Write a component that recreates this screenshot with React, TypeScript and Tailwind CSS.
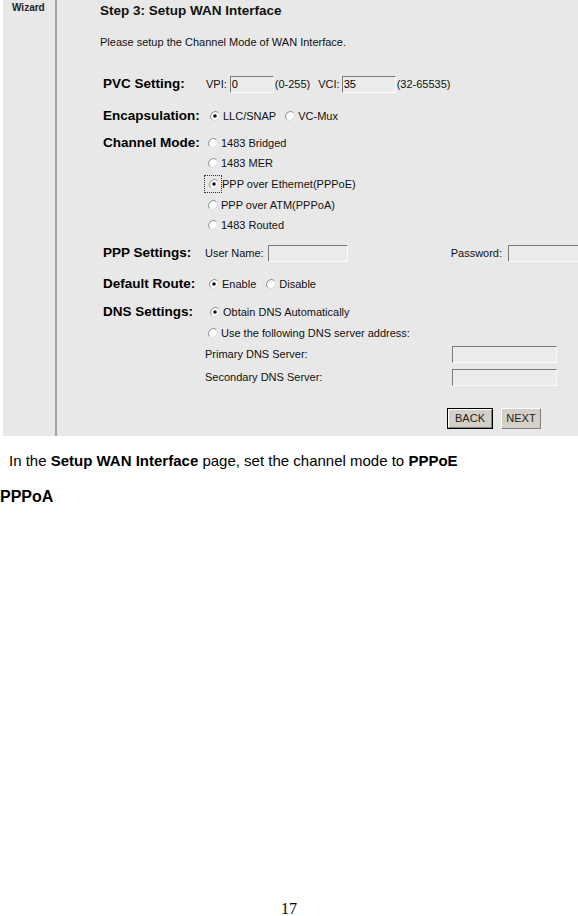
import React from 'react';

const Radio: React.FC<{ checked?: boolean }> = ({ checked }) => (
  <svg width="12" height="12" viewBox="0 0 12 12" className="shrink-0">
    <circle cx="6" cy="6" r="5" fill="#ffffff" />
    <path d="M2.5 9.5 A5 5 0 0 1 9.5 2.5" stroke="#8a8a8a" strokeWidth="1" fill="none" />
    <path d="M9.5 2.5 A5 5 0 0 1 2.5 9.5" stroke="#d6d6d6" strokeWidth="1" fill="none" />
    {checked && <circle cx="6" cy="6" r="1.8" fill="#111111" />}
  </svg>
);

const Field: React.FC<{ value?: string; className?: string }> = ({ value, className }) => (
  <div
    className={`h-[17px] shrink-0 border border-t-[#7a7a7a] border-l-[#7a7a7a] border-b-[#fbfbfb] border-r-[#fbfbfb] bg-[#ebebeb] px-[1px] text-[11px] leading-[15px] text-black ${className}`}
  >
    {value}
  </div>
);

const Row: React.FC<{ label?: string; className?: string; children?: React.ReactNode }> = ({ label, className, children }) => (
  <div className={`flex h-[20px] items-center whitespace-nowrap ${className}`}>
    <span className="w-[105px] shrink-0 pl-[3px] text-[13.5px] font-bold text-black">{label}</span>
    {children}
  </div>
);

const Option: React.FC<{ checked?: boolean; label: string; className?: string }> = ({ checked, label, className }) => (
  <span className={`flex shrink-0 items-center gap-[2px] ${className}`}>
    <Radio checked={checked} />
    <span>{label}</span>
  </span>
);

export default function App() {
  return (
    <div className="flex h-[916px] w-[578px] flex-col overflow-hidden bg-white font-['Liberation_Sans',Arial,sans-serif] text-black">
      {/* Wizard panel */}
      <div className="ml-[3px] flex h-[436px] shrink-0 overflow-hidden bg-[#e8e8e8]">
        <div className="w-[54px] shrink-0 border-r-2 border-[#a2a2a2] pl-[9px] pt-[2px] text-[10px] font-bold leading-[12px] text-[#222]">
          Wizard
        </div>

        <div className="flex shrink-0 flex-col pl-[43px] text-[11px] text-[#111]">
          <div className="mt-[2px] flex h-[18px] items-center text-[13.5px] font-bold">Step 3: Setup WAN Interface</div>
          <div className="mt-[13px] flex h-[18px] items-center">Please setup the Channel Mode of WAN Interface.</div>

          <Row label="PVC Setting:" className="mt-[23px]">
            <span className="ml-[1px]">VPI:</span>
            <Field value="0" className="ml-[3px] w-[44px]" />
            <span className="ml-[1px]">(0-255)</span>
            <span className="ml-[8px]">VCI:</span>
            <Field value="35" className="ml-[2px] w-[54px]" />
            <span className="ml-[1px]">(32-65535)</span>
          </Row>

          <Row label="Encapsulation:" className="mt-[12px]">
            <Option checked label="LLC/SNAP" className="ml-[4px]" />
            <Option label="VC-Mux" className="ml-[8px]" />
          </Row>

          <Row label="Channel Mode:" className="mt-[7px]">
            <Option label="1483 Bridged" className="ml-[2px]" />
          </Row>
          <Row>
            <Option label="1483 MER" className="ml-[2px]" />
          </Row>
          <Row className="mt-[1px]">
            <span className="-ml-[1px] flex h-[18px] items-center border border-dotted border-[#333] pl-[3px] pr-[1px]">
              <Radio checked />
            </span>
            <span>PPP over Ethernet(PPPoE)</span>
          </Row>
          <Row className="mt-[1px]">
            <Option label="PPP over ATM(PPPoA)" className="ml-[2px]" />
          </Row>
          <Row>
            <Option label="1483 Routed" className="ml-[2px]" />
          </Row>

          <Row label="PPP Settings:" className="mt-[8px]">
            <span>User Name:</span>
            <Field className="ml-[4px] w-[80px]" />
            <span className="ml-[103px]">Password:</span>
            <Field className="ml-[6px] w-[80px]" />
          </Row>

          <Row label="Default Route:" className="mt-[11px]">
            <Option checked label="Enable" className="ml-[3px]" />
            <Option label="Disable" className="ml-[9px]" />
          </Row>

          <Row label="DNS Settings:" className="mt-[8px]">
            <Option checked label="Obtain DNS Automatically" className="ml-[4px]" />
          </Row>
          <Row className="mt-[1px]">
            <Option label="Use the following DNS server address:" className="ml-[2px]" />
          </Row>
          <Row className="mt-[1px]">
            <span className="w-[247px] shrink-0">Primary DNS Server:</span>
            <Field className="w-[105px]" />
          </Row>
          <Row className="mt-[3px]">
            <span className="w-[247px] shrink-0">Secondary DNS Server:</span>
            <Field className="w-[105px]" />
          </Row>

          <div className="mt-[20px] flex h-[22px] items-center pl-[347px]">
            <button className="h-[21px] w-[46px] border border-black bg-[#d4d0c8] text-[11px] text-[#222]">
              <span className="flex h-full w-full items-center justify-center border border-t-white border-l-white border-b-[#808080] border-r-[#808080]">
                BACK
              </span>
            </button>
            <button className="ml-[8px] flex h-[21px] w-[40px] items-center justify-center border border-t-white border-l-white border-b-[#808080] border-r-[#808080] bg-[#d4d0c8] text-[11px] text-[#222]">
              NEXT
            </button>
          </div>
        </div>
      </div>

      {/* Caption */}
      <p className="mt-[17px] pl-[9px] text-[15px] leading-[16px]">
        In the <b>Setup WAN Interface</b> page, set the channel mode to <b>PPPoE</b>
      </p>
      <p className="mt-[19px] text-[16px] font-bold leading-[18px]">PPPoA</p>

      <div className="flex-1" />
      <div className="text-center font-['Liberation_Serif',serif] text-[16px] leading-[14px]">17</div>
    </div>
  );
}
